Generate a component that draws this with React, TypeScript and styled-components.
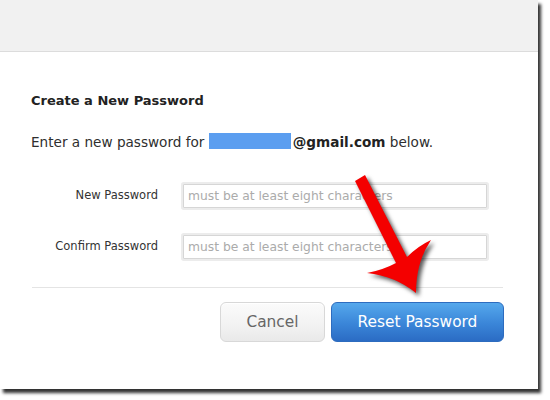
import React from "react";
import styled, { createGlobalStyle } from "styled-components";

const Global = createGlobalStyle`
  html, body { margin: 0; padding: 0; background: #ffffff; }
  body { font-family: "DejaVu Sans", "Liberation Sans", sans-serif; color: #333; }
  * { box-sizing: border-box; }
`;

const Page = styled.div`
  width: 550px;
  height: 400px;
  overflow: hidden;
  background: #fff;
`;

const Window = styled.div`
  position: relative;
  width: 538px;
  height: 389px;
  background: #fff;
  box-shadow: 3px 4px 3px rgba(0, 0, 0, 0.8);
  display: flex;
  flex-direction: column;
`;

const Header = styled.div`
  height: 52px;
  background: #f1f1f1;
  border-bottom: 1px solid #dcdcdc;
  flex: none;
`;

const Body = styled.div`
  padding: 41px 35px 0 31px;
  display: flex;
  flex-direction: column;
`;

const Title = styled.h2`
  margin: 0;
  font-size: 13px;
  font-weight: bold;
  color: #222;
  line-height: 15px;
`;

const Intro = styled.p`
  margin: 25px 0 0;
  font-size: 13.6px;
  line-height: 16px;
  color: #2e2e2e;
`;

const Redacted = styled.span`
  display: inline-block;
  width: 82px;
  height: 16px;
  background: #5b9ef0;
  vertical-align: -2px;
`;

const Email = styled.b`
  margin-left: 2px;
  color: #222;
`;

const Form = styled.div`
  margin-top: 34px;
  display: grid;
  grid-template-columns: 127px 304px;
  column-gap: 25px;
  row-gap: 27px;
  align-items: center;
`;

const Label = styled.label`
  text-align: right;
  font-size: 11.5px;
  color: #333;
  padding-bottom: 2px;
`;

const Input = styled.input`
  width: 304px;
  height: 24px;
  border: 1px solid #d6d6d6;
  box-shadow: 0 0 0 2px #ececec;
  border-radius: 1px;
  padding: 0 4px;
  font-family: "DejaVu Sans", sans-serif;
  font-size: 12.3px;
  color: #333;
  outline: none;
  &::placeholder { color: #ababab; }
`;

const Divider = styled.hr`
  margin: 28px 0 0 1px;
  border: 0;
  border-top: 1px solid #e4e4e4;
  height: 0;
`;

const Actions = styled.div`
  margin-top: 14px;
  display: flex;
  justify-content: flex-end;
  gap: 6px;
  margin-right: -1px;
`;

const Button = styled.button<{ $primary?: boolean }>`
  height: 40px;
  width: ${(p) => (p.$primary ? "173px" : "105px")};
  border-radius: 6px;
  font-family: "DejaVu Sans", sans-serif;
  font-size: 15.4px;
  cursor: pointer;
  color: ${(p) => (p.$primary ? "#ffffff" : "#666")};
  border: 1px solid ${(p) => (p.$primary ? "#2d6cbf" : "#d8d8d8")};
  background: ${(p) =>
    p.$primary
      ? "linear-gradient(#55a8ec, #3a85d8 55%, #2b6cc4)"
      : "linear-gradient(#fbfbfb, #f2f2f2 60%, #e9e9e9)"};
  box-shadow: ${(p) => (p.$primary ? "none" : "inset 0 1px 0 #fff")};
`;

const Arrow = styled.svg`
  position: absolute;
  left: 340px;
  top: 165px;
  width: 110px;
  height: 140px;
  overflow: visible;
  filter: drop-shadow(3px 3px 2px rgba(0, 0, 0, 0.65));
`;

export default function App() {
  return (
    <Page>
      <Global />
      <Window>
        <Header />
        <Body>
          <Title>Create a New Password</Title>
          <Intro>
            Enter a new password for <Redacted />
            <Email>@gmail.com</Email> below.
          </Intro>
          <Form>
            <Label>New Password</Label>
            <Input type="password" placeholder="must be at least eight characters" />
            <Label>Confirm Password</Label>
            <Input type="password" placeholder="must be at least eight characters" />
          </Form>
          <Divider />
          <Actions>
            <Button>Cancel</Button>
            <Button $primary>Reset Password</Button>
          </Actions>
        </Body>
        <Arrow viewBox="0 0 110 140">
          <path
            d="M15,16 L25,10 L67,92 Q78,81 91,75 Q76,97 76,128 Q55,111 27,108 Q43,105 56,98 Z"
            fill="#f40000"
          />
        </Arrow>
      </Window>
    </Page>
  );
}
